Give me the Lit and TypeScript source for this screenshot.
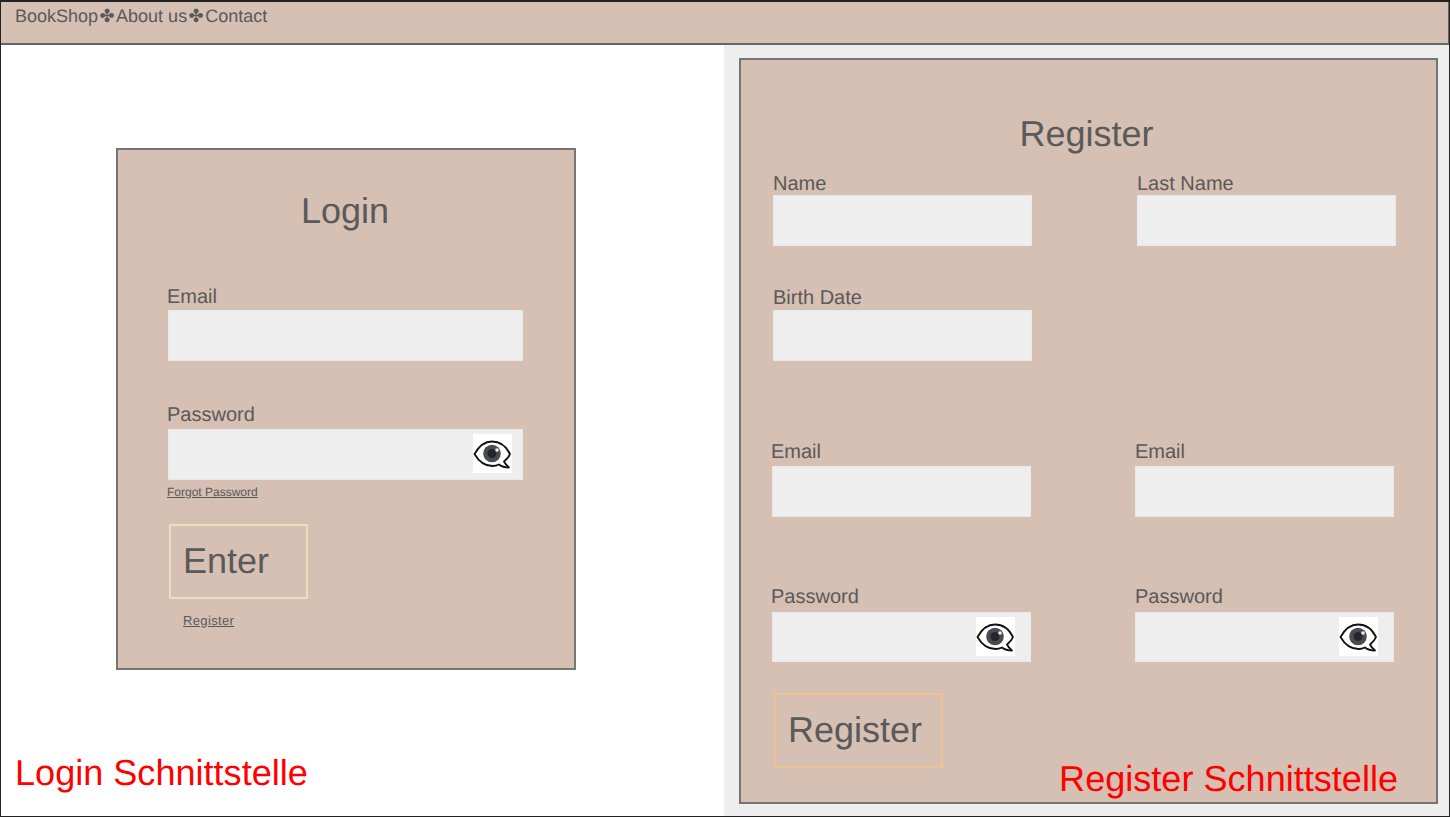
import { LitElement, html, css } from 'lit';
import { customElement } from 'lit/decorators.js';

const eye = html`
  <span class="eye" aria-hidden="true">
    <svg width="39" height="39" viewBox="0 0 39 39">
      <path
        d="M1.5 20C6 12 12 7.5 19 7.5C27 7.5 33 12 37 20C36 23 33.5 25.5 31 27.5C32 29.5 33.5 31.5 36 33.5C32 33.5 28.5 32.5 26 30.5C24 31.5 22 32 19.5 32C11.5 32 5.5 27 1.5 20Z"
        fill="#fff"
        stroke="#111"
        stroke-width="1.8"
        stroke-linejoin="round"
      />
      <circle cx="19" cy="19.5" r="8.8" fill="#4a4c54" />
      <circle cx="19" cy="19.5" r="4.5" fill="#25262b" />
      <circle cx="24" cy="16" r="1.8" fill="#eeeef0" />
    </svg>
  </span>
`;

@customElement('app-root')
export class AppRoot extends LitElement {
  static styles = css`
    :host {
      display: block;
      font-family: 'Liberation Sans', Arial, sans-serif;
      color: #5a5a5a;
      text-rendering: geometricPrecision;
    }
    .frame {
      box-sizing: border-box;
      width: 1450px;
      height: 817px;
      border: 1px solid #222;
      border-top-width: 2px;
      display: flex;
      flex-direction: column;
      background: #fff;
      overflow: hidden;
    }
    .topbar {
      box-sizing: border-box;
      height: 43px;
      flex: none;
      background: #d6bfb3;
      border-bottom: 2px solid #666;
      border-right: 1px solid #666;
      padding: 4px 14px;
      display: flex;
      align-items: flex-start;
      font-size: 18px;
      line-height: 21px;
    }
    .sep {
      font-family: 'DejaVu Sans', sans-serif;
      font-size: 18px;
      width: 18px;
      text-align: center;
    }
    .panes {
      flex: 1;
      display: grid;
      grid-template-columns: 723px 1fr;
      min-height: 0;
    }
    .left {
      display: flex;
      flex-direction: column;
      padding: 103px 0 0 115px;
    }
    .right {
      background: #eee;
      padding: 13px 12px 13px 15px;
    }
    .card {
      box-sizing: border-box;
      background: #d6bfb3;
      border: 2px solid #757575;
    }
    .login {
      width: 460px;
      height: 522px;
      padding: 40px 51px 0 49px;
    }
    .register {
      width: 699px;
      height: 746px;
      padding: 53px 33px 0 32px;
    }
    h2 {
      margin: 0;
      font-weight: 400;
      font-size: 36px;
      line-height: 42px;
      text-align: center;
    }
    .register h2 {
      padding-right: 3px;
    }
    .field label {
      display: block;
      font-size: 20px;
      line-height: 23px;
    }
    .input {
      box-sizing: border-box;
      height: 51px;
      background: #eee;
      border: 1px solid #e8e8e8;
      display: flex;
      align-items: center;
      justify-content: flex-end;
    }
    .eye {
      display: flex;
      width: 39px;
      height: 39px;
      margin-bottom: 2px;
      background: #fff;
    }
    .login .input {
      width: 355px;
      margin-left: 1px;
      padding-right: 10px;
    }
    .login .email {
      margin-top: 54px;
    }
    .login .email label {
      margin-bottom: 1px;
    }
    .login .password {
      margin-top: 43px;
    }
    .login .password label {
      margin-bottom: 2px;
    }
    a {
      color: inherit;
      text-decoration: underline;
      display: block;
    }
    .forgot {
      font-size: 12px;
      line-height: 13px;
      margin-top: 6px;
    }
    .btn {
      box-sizing: border-box;
      display: flex;
      align-items: center;
      height: 75px;
      padding-bottom: 2px;
      font-size: 36px;
      line-height: 42px;
    }
    .enter {
      width: 139px;
      margin: 25px 0 0 2px;
      padding-left: 12px;
      border: 2px solid #f0dcc0;
    }
    .reg-link {
      font-size: 13px;
      line-height: 15px;
      letter-spacing: 0.35px;
      margin: 14px 0 0 16px;
    }
    .note {
      color: #ff0000;
      font-size: 36.1px;
      line-height: 42px;
    }
    .left .note {
      margin: auto 0 23px -101px;
    }
    .row {
      display: grid;
      grid-template-columns: 259px 259px;
      column-gap: 105px;
    }
    .register .names {
      margin-top: 18px;
    }
    .register .names label {
      margin-bottom: -1px;
    }
    .register .birth {
      margin-top: 41px;
    }
    .register .emails {
      margin: 80px 0 0 -1px;
      column-gap: 104px;
    }
    .register .emails label {
      margin-bottom: 2px;
    }
    .register .passwords {
      margin: 69px 0 0 -1px;
      column-gap: 104px;
    }
    .register .passwords label {
      margin-bottom: 3px;
    }
    .register .passwords .input {
      height: 50px;
    }
    .register .emails .field:first-child label,
    .register .passwords .field:first-child label {
      margin-left: -1px;
    }
    .register .input {
      padding-right: 15px;
    }
    .bottom {
      display: flex;
      justify-content: space-between;
      align-items: flex-start;
      margin-top: 31px;
      padding-right: 5px;
    }
    .register-btn {
      width: 169px;
      margin-left: 1px;
      padding-left: 12px;
      border: 2px solid #eec394;
    }
    .bottom .note {
      margin-top: 65px;
    }
  `;

  render() {
    return html`
      <div class="frame">
        <header class="topbar">
          <span>BookShop</span><span class="sep">✤</span><span>About us</span
          ><span class="sep">✤</span><span>Contact</span>
        </header>
        <div class="panes">
          <section class="left">
            <div class="card login">
              <h2>Login</h2>
              <div class="field email">
                <label>Email</label>
                <div class="input"></div>
              </div>
              <div class="field password">
                <label>Password</label>
                <div class="input">${eye}</div>
              </div>
              <a class="forgot">Forgot Password</a>
              <div class="btn enter">Enter</div>
              <a class="reg-link">Register</a>
            </div>
            <div class="note">Login Schnittstelle</div>
          </section>
          <section class="right">
            <div class="card register">
              <h2>Register</h2>
              <div class="row names">
                <div class="field"><label>Name</label><div class="input"></div></div>
                <div class="field"><label>Last Name</label><div class="input"></div></div>
              </div>
              <div class="row birth">
                <div class="field"><label>Birth Date</label><div class="input"></div></div>
              </div>
              <div class="row emails">
                <div class="field"><label>Email</label><div class="input"></div></div>
                <div class="field"><label>Email</label><div class="input"></div></div>
              </div>
              <div class="row passwords">
                <div class="field"><label>Password</label><div class="input">${eye}</div></div>
                <div class="field"><label>Password</label><div class="input">${eye}</div></div>
              </div>
              <div class="bottom">
                <div class="btn register-btn">Register</div>
                <div class="note">Register Schnittstelle</div>
              </div>
            </div>
          </section>
        </div>
      </div>
    `;
  }
}
